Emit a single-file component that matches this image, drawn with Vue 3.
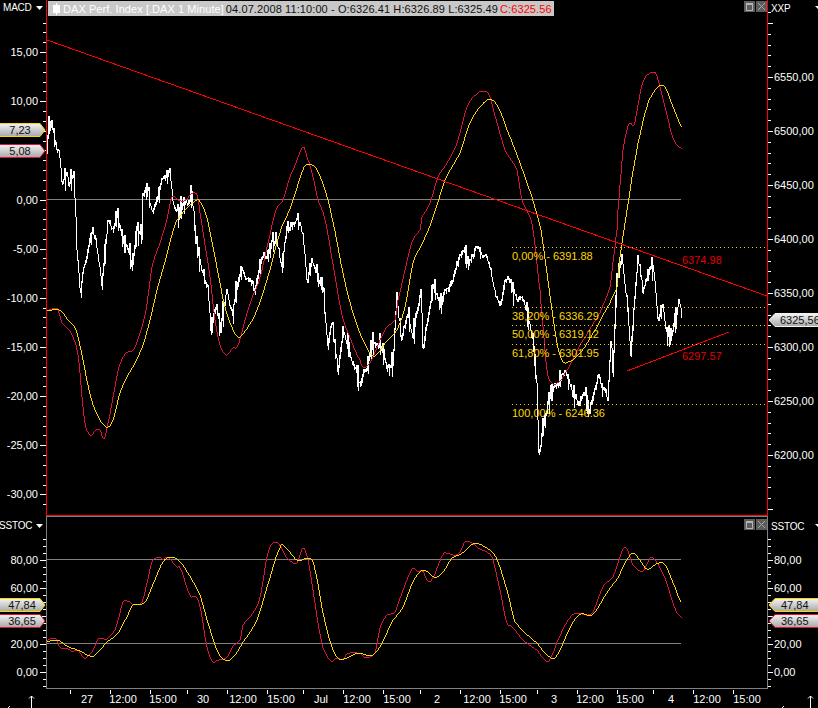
<template>
  <div class="chart">
    <!-- MACD / price pane -->
    <div class="pane pane-main">
      <svg class="axis" viewBox="0 0 46 516" width="46" height="516">
        <defs>
          <linearGradient id="tagFill" x1="0" y1="0" x2="0" y2="1">
            <stop offset="0" stop-color="#f4f4f4" />
            <stop offset="1" stop-color="#a8a8a8" />
          </linearGradient>
        </defs>
        <rect v-for="t in macdTicks" :key="t.y" :x="t.major ? 40 : 43" :y="t.y" :width="t.major ? 6 : 3" height="1" fill="#fff" />
        <text v-for="t in macdLabels" :key="t.label" x="38" :y="t.y + 4" text-anchor="end" class="axis-text">{{ t.label }}</text>
        <g v-for="tag in leftTagsMain" :key="tag.label">
          <polygon :points="leftTagShape(tag.y)" fill="url(#tagFill)" :stroke="tag.color" />
          <text x="20" :y="tag.y + 11" text-anchor="middle" class="tag-text">{{ tag.label }}</text>
        </g>
      </svg>

      <div class="plot plot-main">
        <svg viewBox="47 0 720 515" width="720" height="515">
          <line x1="47" y1="199.5" x2="681" y2="199.5" class="grid-line" />
          <polyline :points="pricePoints" class="price" />
          <polyline :points="toPoints(smooth(macdFast))" class="fast" />
          <polyline :points="toPoints(smooth(macdSlow))" class="slow" />
          <line x1="47" y1="40" x2="767" y2="296" class="trend" />
          <line x1="627" y1="371" x2="729" y2="332" class="trend" />
          <line v-for="f in fibs" :key="f.y" x1="512" :y1="f.y + 0.5" x2="767" :y2="f.y + 0.5" class="fib-line" />
          <text v-for="f in fibs" :key="f.label" x="512" :y="f.y + 13" class="fib-text">{{ f.label }}</text>
          <text x="682" y="264" class="trend-text">6374.98</text>
          <text x="682" y="360" class="trend-text">6297.57</text>
        </svg>

        <div class="title-bar">
          <svg class="candle" viewBox="0 0 7 12" width="7" height="12">
            <rect x="0" y="2" width="7" height="8" fill="#fff" />
            <rect x="3" y="0" width="1" height="12" fill="#fff" />
          </svg>
          <span class="title-name">DAX Perf. Index [.DAX  1 Minute]</span>
          <span class="title-quote">04.07.2008 11:10:00 - O:6326.41 H:6326.89 L:6325.49</span>
          <span class="title-close">C:6325.56</span>
        </div>
        <div class="win-buttons">
          <span class="win-btn"><i class="win-max"></i></span>
          <span class="win-btn">
            <svg viewBox="0 0 11 11" width="11" height="11"><path d="M2 2l7 7M9 2l-7 7" stroke="#a8a8a8" fill="none" /></svg>
          </span>
        </div>
      </div>

      <svg class="axis" viewBox="768 0 50 516" width="50" height="516">
        <rect v-for="t in priceTicks" :key="t.y" x="768" :y="t.y" :width="t.major ? 5 : 3" height="1" fill="#fff" />
        <text v-for="t in priceLabels" :key="t.label" x="774" :y="t.y + 4" class="axis-text">{{ t.label }}</text>
        <text x="771" y="12" class="axis-name">XXP</text>
        <polygon points="815,6 821,6 818,9" fill="#fff" />
        <polygon :points="rightTagShape(313)" fill="url(#tagFill)" stroke="#f0f0f0" />
        <text x="780" y="324" class="tag-text">6325,56</text>
      </svg>

      <div class="pane-name">MACD <svg viewBox="0 0 7 4" width="7" height="4"><path d="M0 0h7l-3.500 4z" fill="#fff" /></svg></div>
    </div>

    <!-- slow stochastic pane -->
    <div class="pane pane-stoch">
      <svg class="axis" viewBox="0 516 46 173" width="46" height="173">
        <rect v-for="t in stochTicks" :key="t.y" :x="t.major ? 40 : 43" :y="t.y" :width="t.major ? 6 : 3" height="1" fill="#fff" />
        <text v-for="t in stochLabels" :key="t.label" x="38" :y="t.y + 4" text-anchor="end" class="axis-text">{{ t.label }}</text>
        <g v-for="tag in leftTagsStoch" :key="tag.label">
          <polygon :points="leftTagShape(tag.y)" fill="url(#tagFill)" :stroke="tag.color" />
          <text x="22" :y="tag.y + 11" text-anchor="middle" class="tag-text">{{ tag.label }}</text>
        </g>
      </svg>

      <div class="plot plot-stoch">
        <svg viewBox="47 517 720 171" width="720" height="171">
          <line x1="47" y1="559.5" x2="681" y2="559.5" class="grid-line" />
          <line x1="47" y1="643.5" x2="681" y2="643.5" class="grid-line" />
          <polyline :points="toPoints(smooth(stochFast))" class="fast" />
          <polyline :points="toPoints(smooth(stochSlow))" class="slow" />
        </svg>
        <div class="win-buttons">
          <span class="win-btn"><i class="win-max"></i></span>
          <span class="win-btn">
            <svg viewBox="0 0 11 11" width="11" height="11"><path d="M2 2l7 7M9 2l-7 7" stroke="#a8a8a8" fill="none" /></svg>
          </span>
        </div>
      </div>

      <svg class="axis" viewBox="768 516 50 173" width="50" height="173">
        <rect v-for="t in stochTicks" :key="t.y" x="768" :y="t.y" :width="t.major ? 5 : 3" height="1" fill="#fff" />
        <text v-for="t in stochLabels" :key="t.label" x="774" :y="t.y + 4" class="axis-text">{{ t.label }}</text>
        <text x="771" y="530" class="axis-name">SSTOC</text>
        <polygon points="815,524 821,524 818,527" fill="#fff" />
        <g v-for="tag in leftTagsStoch" :key="tag.label">
          <polygon :points="rightTagShape(tag.y)" fill="url(#tagFill)" :stroke="tag.color" />
          <text x="781" :y="tag.y + 11" class="tag-text">{{ tag.label }}</text>
        </g>
      </svg>

      <div class="pane-name pane-name-stoch">SSTOC <svg viewBox="0 0 7 4" width="7" height="4"><path d="M0 0h7l-3.500 4z" fill="#fff" /></svg></div>
    </div>

    <!-- time axis -->
    <svg class="time-axis" viewBox="0 689 818 19" width="818" height="19">
      <rect v-for="x in timeTicks" :key="x" :x="x" y="690" width="1" height="4" fill="#fff" />
      <text v-for="t in timeLabels" :key="t.x" :x="t.x" y="703" text-anchor="middle" class="axis-text">{{ t.label }}</text>
      <path d="M31.500 708V696M29 698.500l2.500-2.500 2.500 2.500" class="arrow" />
      <path d="M810.500 708V696M808 698.500l2.500-2.500 2.500 2.500" class="arrow" />
      <path d="M8 708l2-2" class="arrow" />
      <path d="M782 708l2-2" class="arrow" />
    </svg>
  </div>
</template>

<script setup>
// all curves are in page pixels, traced as x,y pairs
const macdFast = [
  47,310, 55,308, 58,310, 62,323, 70,331, 76,345, 79,363, 83,407, 86,428, 91,435, 97,429, 100,430, 104,439,
  108,423, 113,397, 119,367, 126,353, 134,349, 140,333, 146,310, 152,267, 160,243, 166,223, 172,197, 178,200,
  186,200, 192,193, 197,195, 200,213, 205,245, 210,277, 215,320, 220,345, 226,355, 233,348, 238,345, 245,320,
  252,298, 260,277, 270,235, 276,210, 283,200, 290,177, 295,165, 303,147, 307,157, 312,173, 318,200, 325,220,
  334,270, 342,315, 350,338, 360,360, 363,367, 370,363, 378,345, 386,328, 395,320, 398,300, 405,270, 412,242,
  420,230, 422,217, 430,203, 438,177, 447,163, 457,143, 467,107, 478,93, 482,91, 489,95, 497,123, 505,150,
  517,170, 522,200, 528,213, 533,230, 540,290, 542,317, 547,370, 551,382, 557,383, 565,373, 580,345, 600,313,
  610,287, 615,247, 617,230, 618,210, 620,185, 623,150, 627,130, 630,123, 634,125, 638,105, 642,85, 647,75,
  655,72, 658,80, 662,95, 667,115, 672,135, 677,145, 682,148,
];
const macdSlow = [
  47,310, 60,310, 68,320, 76,330, 82,355, 88,385, 93,405, 100,420, 107,427, 113,420, 120,393, 127,377, 135,363,
  143,345, 150,320, 157,290, 165,262, 172,235, 177,220, 185,210, 197,200, 200,202, 207,218, 213,247, 218,273,
  224,303, 230,323, 238,337, 248,327, 258,307, 270,270, 280,233, 286,218, 293,200, 303,170, 309,164, 317,170,
  325,190, 332,218, 343,273, 353,313, 363,340, 372,355, 377,354, 385,343, 397,330, 405,307, 413,263, 423,242,
  433,217, 445,180, 460,153, 470,123, 480,107, 490,99, 498,107, 507,130, 520,163, 532,197, 541,230, 547,273,
  552,310, 557,343, 562,360, 567,362, 580,353, 597,327, 610,303, 617,287, 620,257, 624,230, 627,210, 632,177,
  638,143, 647,107, 652,95, 659,86, 665,87, 673,107, 682,127,
];
const stochFast = [
  47,640, 55,638, 60,647, 67,648, 72,651, 78,650, 83,657, 87,657, 93,650, 99,638, 107,639, 115,630, 118,620,
  123,602, 128,601, 133,604, 142,602, 147,583, 152,562, 158,557, 163,559, 168,557, 177,567, 180,568, 190,595,
  195,596, 200,607, 207,647, 213,662, 217,660, 227,657, 233,646, 240,640, 243,625, 253,613, 260,597, 268,553,
  275,542, 280,546, 287,558, 297,563, 303,548, 308,560, 313,590, 318,623, 323,648, 331,661, 337,658, 343,659,
  348,653, 360,653, 365,657, 375,653, 380,628, 387,615, 395,612, 400,598, 407,580, 413,568, 417,571, 423,571,
  427,580, 432,579, 443,555, 447,553, 455,555, 460,552, 465,542, 470,542, 478,548, 492,557, 500,590, 507,623,
  510,625, 523,640, 537,650, 545,660, 550,659, 558,640, 567,622, 575,613, 592,613, 603,587, 613,577, 618,563,
  623,549, 627,549, 633,565, 643,571, 649,560, 653,558, 665,578, 675,608, 682,618,
];
const stochSlow = [
  47,641, 58,640, 67,646, 78,650, 92,656, 98,652, 107,642, 118,633, 127,617, 133,605, 145,602, 155,580, 163,562,
  170,557, 178,560, 187,572, 200,595, 208,623, 217,650, 225,660, 233,657, 243,642, 257,620, 267,587, 280,548,
  285,547, 297,560, 310,558, 315,570, 323,613, 332,647, 340,659, 358,653, 373,655, 382,643, 392,622, 403,607,
  413,582, 423,570, 435,577, 443,572, 452,558, 462,553, 475,543, 490,550, 497,560, 507,590, 515,622, 537,643,
  550,657, 557,655, 570,628, 580,614, 593,614, 607,593, 618,578, 625,563, 633,553, 638,558, 647,569, 658,563,
  665,565, 675,587, 681,602,
];
const priceAnchors = [
  47,155, 49,130, 52,125, 54,140, 57,150, 60,160, 62,187, 67,173, 70,183, 74,175, 75,200, 77,233, 77,257, 80,287,
  81,295, 83,270, 89,250, 93,230, 98,253, 102,290, 105,253, 108,223, 113,230, 117,222, 127,247, 132,267, 137,230,
  142,240, 143,197, 148,192, 153,213, 157,203, 163,177, 170,170, 173,203, 178,213, 187,200, 192,197, 195,237,
  200,260, 208,287, 211,333, 217,307, 220,337, 227,290, 233,313, 240,267, 250,280, 255,293, 262,253, 270,250,
  277,240, 282,267, 287,230, 297,223, 303,237, 307,280, 312,260, 323,293, 328,350, 332,323, 338,370, 343,332,
  350,350, 360,387, 367,367, 373,347, 382,350, 387,370, 393,370, 397,300, 401,337, 407,317, 413,337, 421,290,
  423,350, 433,283, 440,303, 453,280, 463,245, 468,265, 478,247, 490,273, 500,305, 507,277, 517,297, 524,297,
  533,340, 537,387, 539,453, 543,430, 550,397, 558,383, 565,372, 572,393, 578,403, 583,393, 590,410, 598,377,
  608,403, 611,347, 613,380, 617,280, 622,250, 627,297, 631,357, 638,252, 643,290, 653,267, 658,317, 663,303,
  667,332, 672,337, 679,305, 682,318,
];

function toPoints(list) {
  const out = [];
  for (let i = 0; i < list.length; i += 2) out.push(list[i] + "," + list[i + 1]);
  return out.join(" ");
}

// catmull-rom through the traced points, one sample per pixel
function smooth(list) {
  const n = list.length / 2;
  const yAt = (i) => list[Math.max(0, Math.min(n - 1, i)) * 2 + 1];
  const out = [];
  for (let i = 0; i < n - 1; i++) {
    const x0 = list[i * 2];
    const x1 = list[i * 2 + 2];
    for (let x = x0; x < x1; x++) {
      const t = (x - x0) / (x1 - x0);
      const [a, b, c, d] = [yAt(i - 1), yAt(i), yAt(i + 1), yAt(i + 2)];
      const y = 0.5 * (2 * b + (c - a) * t + (2 * a - 5 * b + 4 * c - d) * t * t + (3 * b - a - 3 * c + d) * t * t * t);
      out.push(x, Math.round(y));
    }
  }
  out.push(list[n * 2 - 2], list[n * 2 - 1]);
  return out;
}

// the close line has minute bars, so each pixel gets a small high/low spike
function roughen(list) {
  let seed = 17;
  const next = () => {
    seed = (seed * 16807) % 2147483647;
    return seed / 2147483647;
  };
  const out = [];
  let drift = 0;
  for (let i = 0; i < list.length - 2; i += 2) {
    const [x0, y0, x1, y1] = list.slice(i, i + 4);
    for (let x = x0; x < x1; x++) {
      drift = drift * 0.7 + (next() - 0.5) * 7;
      const y = y0 + ((y1 - y0) * (x - x0)) / (x1 - x0) + drift;
      const spike = next() > 0.82 ? 4 + next() * 7 : 0;
      out.push(x, Math.round(y - next() * 3 - spike), x, Math.round(y + next() * 3 + spike));
    }
  }
  out.push(list[list.length - 2], list[list.length - 1]);
  return out;
}

const pricePoints = toPoints(roughen(priceAnchors));

function makeTicks(from, to, step, majorEvery, toY) {
  const ticks = [];
  for (let v = from; v <= to; v += step) {
    ticks.push({ y: Math.round(toY(v)), major: v % majorEvery === 0 });
  }
  return ticks;
}

function money(v) {
  return v.toFixed(2).replace(".", ",");
}

const macdY = (v) => 199.5 - 9.83 * v;
const priceY = (v) => 347 - (v - 6300) * 1.08;
const stochY = (v) => 671.5 - 1.4 * v;

const macdTicks = makeTicks(-31, 18, 1, 5, macdY);
const macdLabels = [15, 10, 0, -5, -10, -15, -20, -25, -30].map((v) => ({ label: money(v), y: Math.round(macdY(v)) }));
const priceTicks = makeTicks(6150, 6610, 10, 50, priceY);
const priceLabels = [6550, 6500, 6450, 6400, 6350, 6300, 6250, 6200].map((v) => ({ label: money(v), y: Math.round(priceY(v)) }));
const stochTicks = makeTicks(-10, 95, 5, 20, stochY);
const stochLabels = [80, 60, 20, 0].map((v) => ({ label: money(v), y: Math.round(stochY(v)) }));

const leftTagsMain = [
  { label: "7,23", y: 123, color: "#ffd700" },
  { label: "5,08", y: 144, color: "#dc143c" },
];
const leftTagsStoch = [
  { label: "47,84", y: 598, color: "#ffd700" },
  { label: "36,65", y: 614, color: "#dc143c" },
];

function leftTagShape(y) {
  return `-2,${y + 0.5} 40,${y + 0.5} 45,${y + 7} 40,${y + 13.5} -2,${y + 13.5}`;
}

function rightTagShape(y) {
  return `821,${y + 0.5} 775,${y + 0.5} 769,${y + 7} 775,${y + 13.5} 821,${y + 13.5}`;
}

const fibs = [
  { y: 247, label: "0,00% - 6391.88" },
  { y: 307, label: "38,20% - 6336.29" },
  { y: 325, label: "50,00% - 6319.12" },
  { y: 344, label: "61,80% - 6301.95" },
  { y: 404, label: "100,00% - 6246.36" },
];

const timeTicks = [70, 110, 150, 187, 227, 267, 303, 343, 383, 420, 460, 500, 537, 577, 617, 653, 693, 733];
const timeLabels = [
  { x: 87, label: "27" }, { x: 123, label: "12:00" }, { x: 163, label: "15:00" }, { x: 203, label: "30" },
  { x: 243, label: "12:00" }, { x: 281, label: "15:00" }, { x: 321, label: "Jul" }, { x: 357, label: "12:00" },
  { x: 397, label: "15:00" }, { x: 437, label: "2" }, { x: 477, label: "12:00" }, { x: 513, label: "15:00" },
  { x: 554, label: "3" }, { x: 590, label: "12:00" }, { x: 630, label: "15:00" }, { x: 671, label: "4" },
  { x: 707, label: "12:00" }, { x: 747, label: "15:00" },
];
</script>

<style>
html,
body {
  background: #000;
}
</style>

<style scoped>
.chart {
  width: 818px;
  height: 708px;
  background: #000;
  overflow: hidden;
  font-family: "Liberation Sans", Arial, sans-serif;
}

.pane {
  position: relative;
  display: grid;
  grid-template-columns: 46px 722px 50px;
}

.pane-main {
  height: 516px;
}

.pane-stoch {
  height: 173px;
}

.axis,
.time-axis {
  display: block;
  overflow: hidden;
}

.axis-text {
  fill: #fff;
  font-size: 11px;
}

.axis-name {
  fill: #fff;
  font-size: 10px;
  letter-spacing: -0.2px;
}

.tag-text {
  fill: #111;
  font-size: 11px;
}

.plot {
  position: relative;
  box-sizing: border-box;
}

.plot svg {
  display: block;
}

.plot-main {
  height: 516px;
  border-left: 1px solid #f00;
  border-right: 1px solid #f00;
  border-bottom: 1px solid #f00;
}

.plot-stoch {
  height: 173px;
  border: 1px solid #808080;
}

polyline,
line {
  shape-rendering: crispEdges;
  fill: none;
}

.grid-line {
  stroke: #808080;
}

.price {
  stroke: #fff;
  stroke-width: 1;
}

.fast {
  stroke: #dc143c;
}

.slow {
  stroke: #ffd700;
}

.trend {
  stroke: #f00;
}

.fib-line {
  stroke: #ffd700;
  stroke-dasharray: 1 3;
}

.fib-text {
  fill: #ffd700;
  font-size: 11px;
}

.trend-text {
  fill: #e00000;
  font-size: 11px;
}

.title-bar {
  position: absolute;
  left: 1px;
  top: 1px;
  width: 506px;
  height: 15px;
  display: flex;
  align-items: center;
  gap: 2px;
  padding-left: 5px;
  box-sizing: border-box;
  background: #c8c8c8;
  font-size: 11px;
  white-space: pre;
}

.candle {
  flex: none;
  margin-right: 1px;
}

.title-name {
  color: #fff;
  letter-spacing: 0.06px;
}

.title-quote {
  color: #111;
  letter-spacing: 0.1px;
}

.title-close {
  color: #f00;
  letter-spacing: 0.1px;
}

.win-buttons {
  position: absolute;
  top: 1px;
  right: 0;
  display: flex;
  gap: 1px;
}

.plot-stoch .win-buttons {
  top: 2px;
  right: 0;
}

.win-btn {
  width: 11px;
  height: 11px;
  display: flex;
  align-items: center;
  justify-content: center;
  background: #5c5c5c;
}

.win-max {
  display: block;
  width: 5px;
  height: 5px;
  border: 1px solid #b4b4b4;
  border-top-width: 2px;
}

.pane-name {
  position: absolute;
  left: 3px;
  top: 1px;
  display: flex;
  align-items: center;
  gap: 4px;
  color: #fff;
  font-size: 10px;
  letter-spacing: -0.2px;
  line-height: 14px;
}

.pane-name-stoch {
  left: -1px;
  top: 3px;
}

.arrow {
  stroke: #fff;
  fill: none;
}
</style>
